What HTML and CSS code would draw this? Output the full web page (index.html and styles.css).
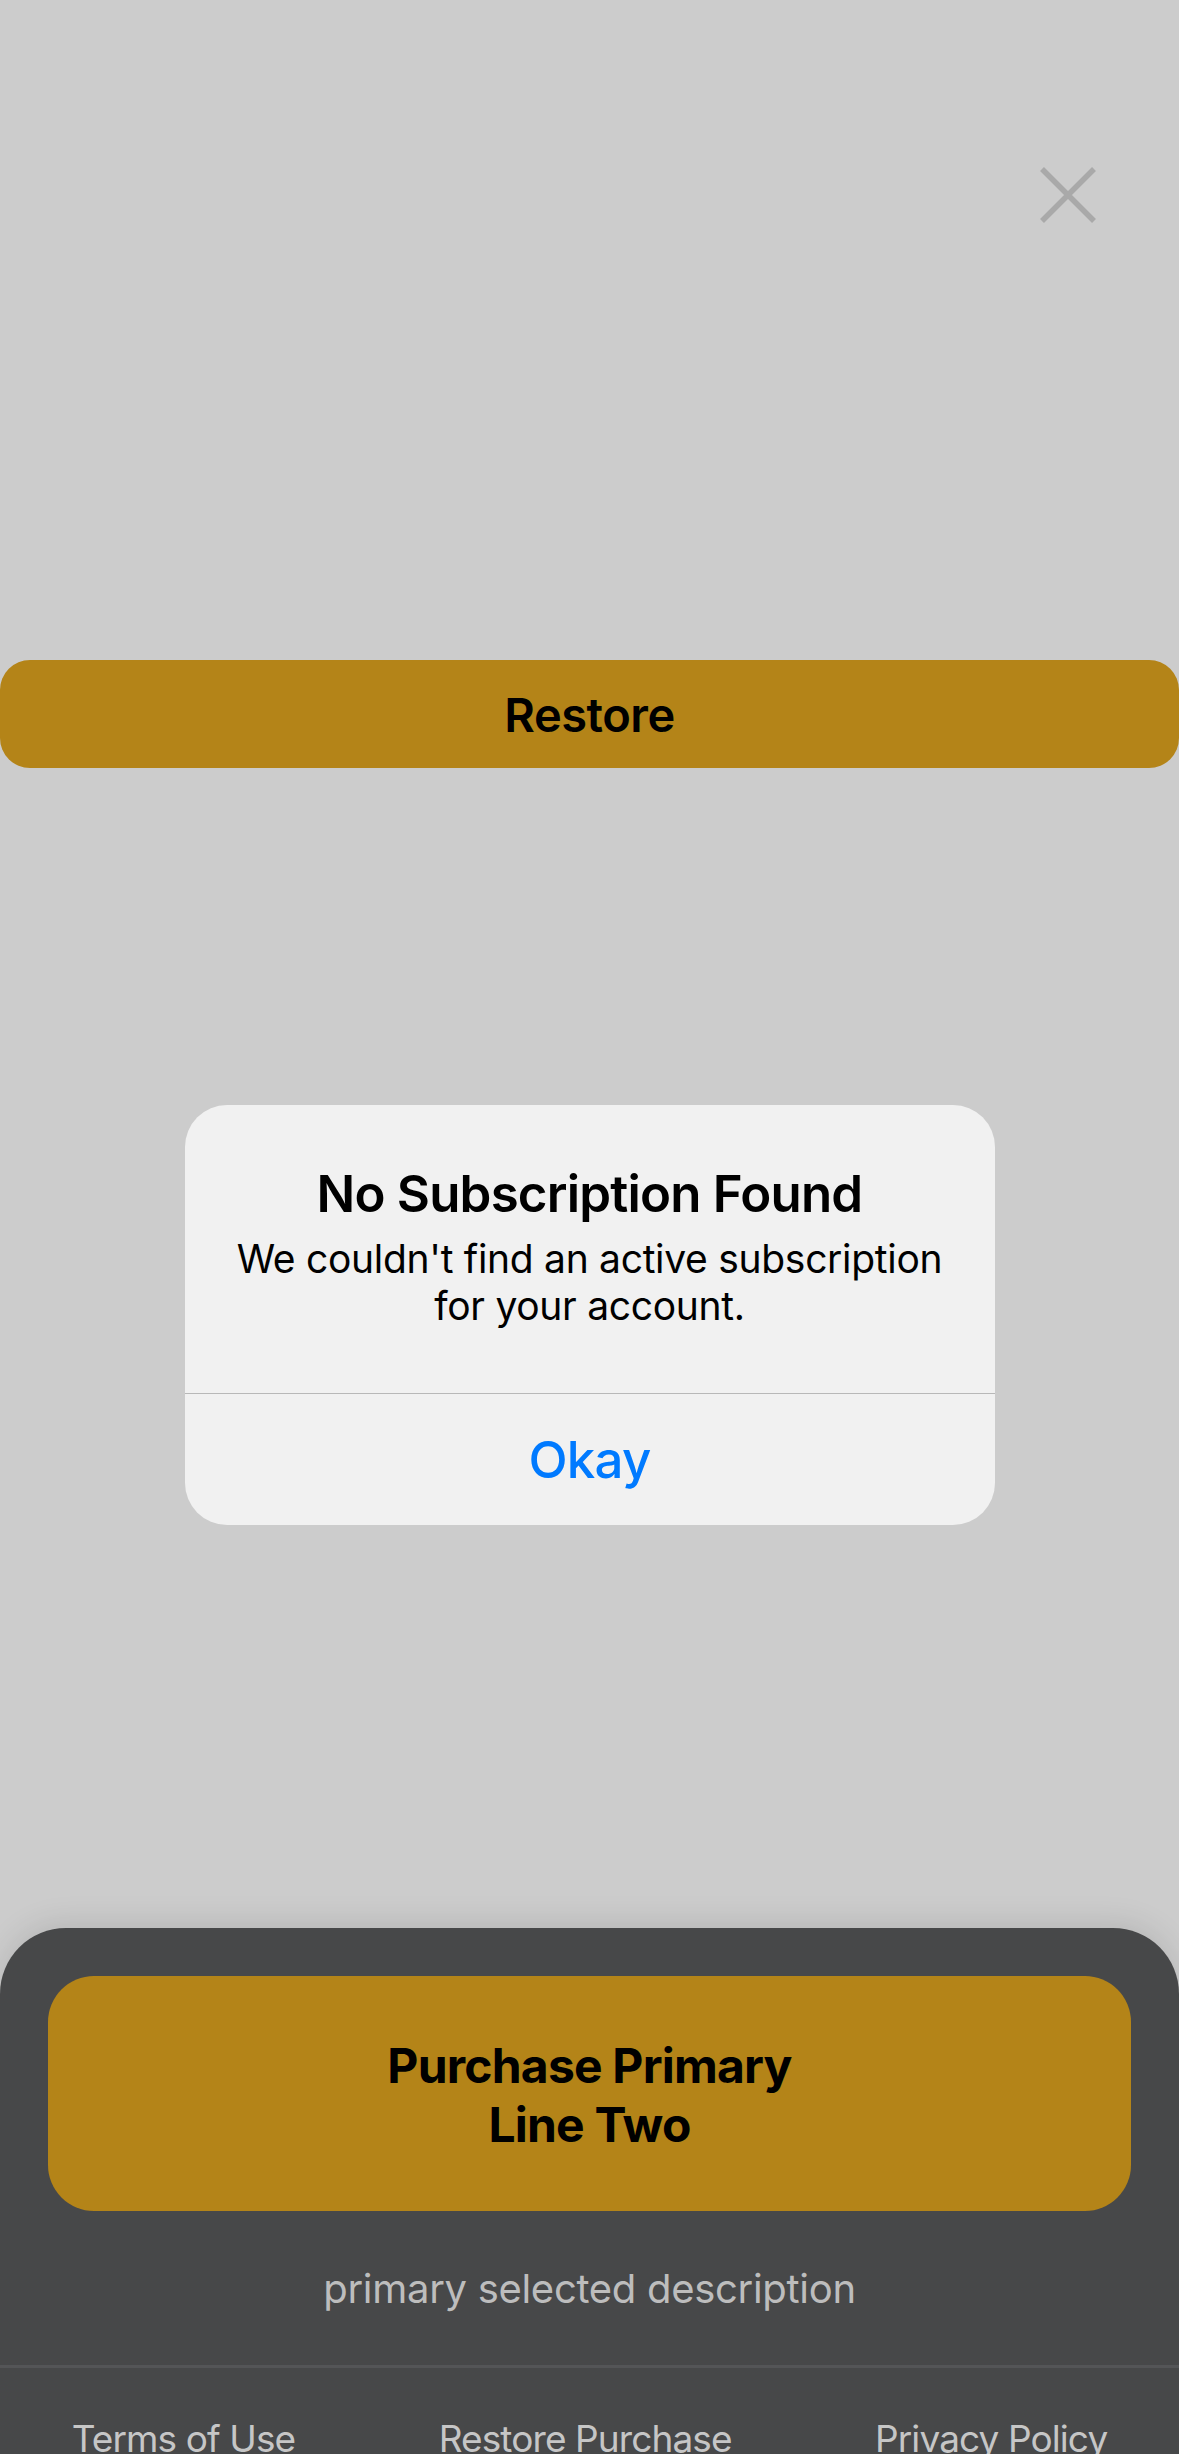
FILE: index.html
```html
<!DOCTYPE html>
<html lang="en">
<head>
<meta charset="utf-8">
<title>Paywall</title>
<link rel="stylesheet" href="styles.css">
</head>
<body>
<div class="screen">
  <div class="main">
    <div class="topbar">
      <button class="close" aria-label="Close">
        <svg width="58" height="58" viewBox="0 0 58 58"><path d="M3 3 L55 55 M55 3 L3 55" stroke="#a9a9a9" stroke-width="5.5" fill="none"/></svg>
      </button>
    </div>
    <button class="restore">Restore</button>
  </div>
  <div class="sheet">
    <button class="purchase">Purchase Primary<br>Line Two</button>
    <div class="desc">primary selected description</div>
    <div class="rule"></div>
    <div class="links">
      <a class="link">Terms of Use</a>
      <a class="link">Restore Purchase</a>
      <a class="link">Privacy Policy</a>
    </div>
  </div>
  <div class="overlay">
    <div class="alert">
      <div class="alert-body">
        <div class="alert-title">No Subscription Found</div>
        <div class="alert-msg">We couldn't find an active subscription<br>for your account.</div>
      </div>
      <div class="alert-btn">Okay</div>
    </div>
  </div>
</div>
</body>
</html>
```

FILE: styles.css
```css
* { box-sizing: border-box; }
html, body { margin: 0; padding: 0; }
body {
  width: 1179px;
  height: 2454px;
  overflow: hidden;
  background: #cccccc;
  font-family: Inter, "Noto Sans", "Liberation Sans", sans-serif;
}
.screen {
  position: relative;
  width: 1179px;
  height: 2454px;
  display: flex;
  flex-direction: column;
}
.main {
  flex: 1;
  display: flex;
  flex-direction: column;
}
.topbar {
  display: flex;
  justify-content: flex-end;
  padding: 166px 82px 0 0;
}
.close {
  width: 58px;
  height: 58px;
  padding: 0;
  border: 0;
  background: none;
  display: block;
}
.close svg { display: block; }
.restore {
  margin-top: 436px;
  width: 1179px;
  height: 108px;
  border: 0;
  border-radius: 30px;
  background: #b48418;
  color: #000;
  font-family: Inter, "Noto Sans", sans-serif;
  font-weight: 600;
  font-size: 47px;
  letter-spacing: -0.5px;
  padding: 0;
}
.sheet {
  flex: 0 0 526px;
  height: 526px;
  overflow: hidden;
  background: #474849;
  border-radius: 66px 66px 0 0;
  box-shadow: 0 -6px 30px rgba(0,0,0,0.10);
  padding-top: 48px;
  display: flex;
  flex-direction: column;
}
.sheet > * { flex-shrink: 0; }
.purchase {
  margin: 0 48px;
  height: 235px;
  border: 0;
  border-radius: 46px;
  background: #b48418;
  color: #000;
  font-family: Inter, "Noto Sans", sans-serif;
  font-weight: 700;
  font-size: 48px;
  line-height: 59px;
  letter-spacing: -0.8px;
  padding: 2px 0 0 0;
}
.desc {
  height: 154px;
  display: flex;
  align-items: center;
  justify-content: center;
  color: #bdbdbd;
  font-size: 40px;
  letter-spacing: -0.3px;
}
.rule {
  height: 3px;
  background: #545557;
}
.links {
  display: flex;
  justify-content: space-around;
  padding-top: 48px;
}
.link {
  color: #c6c6c6;
  font-size: 37px;
  line-height: 46px;
  letter-spacing: -0.9px;
}
.overlay {
  position: absolute;
  inset: 0;
  display: flex;
  justify-content: center;
  align-items: flex-start;
  padding-top: 1105px;
}
.alert {
  width: 810px;
  background: #f1f1f1;
  border-radius: 42px;
  overflow: hidden;
  text-align: center;
  color: #000;
}
.alert-body {
  padding: 58px 40px 64px;
  border-bottom: 1px solid #b8b8b8;
}
.alert-title {
  font-size: 51px;
  line-height: 61px;
  font-weight: 600;
  letter-spacing: -0.8px;
}
.alert-msg {
  margin-top: 11px;
  font-size: 39px;
  line-height: 47px;
  letter-spacing: -0.3px;
  white-space: nowrap;
}
.alert-btn {
  height: 131px;
  display: flex;
  align-items: center;
  justify-content: center;
  color: #007aff;
  font-size: 51px;
  font-weight: 500;
  letter-spacing: -0.8px;
}
```
